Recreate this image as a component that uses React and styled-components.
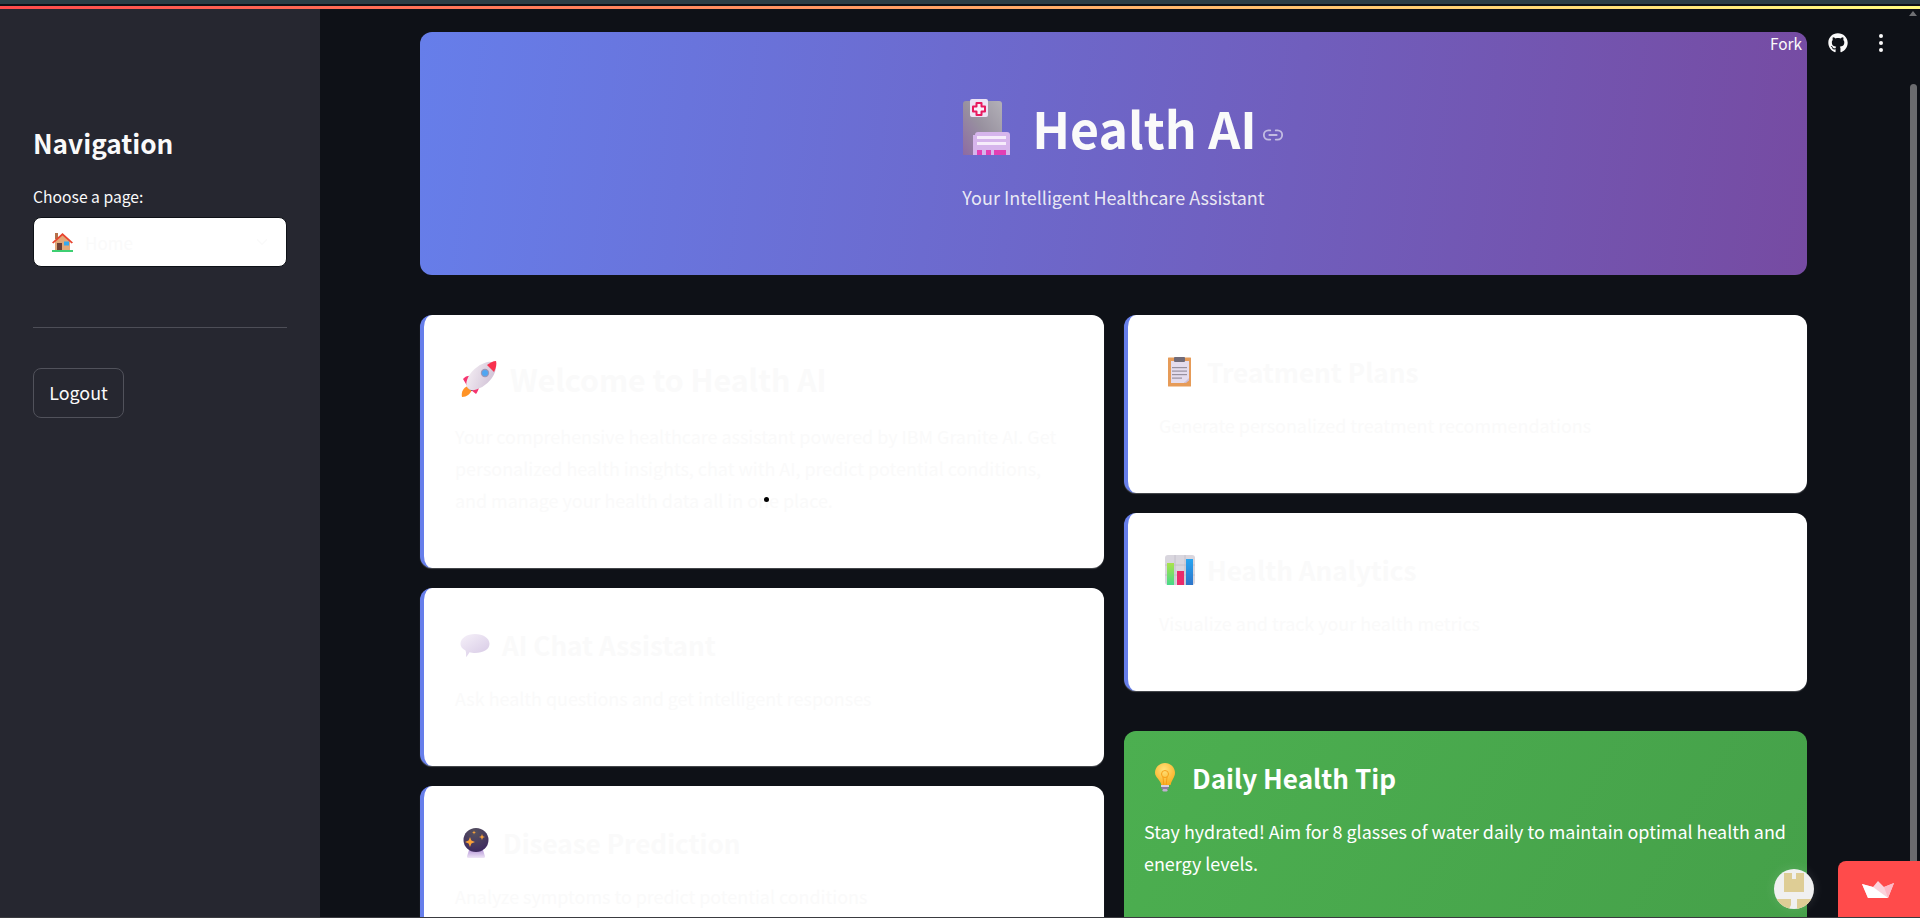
import React from "react";
import styled, { createGlobalStyle } from "styled-components";
import { ChevronDown, Link2 } from "lucide-react";
import { FaGithub } from "react-icons/fa";

const GlobalStyle = createGlobalStyle`
  html, body {
    margin: 0;
    height: 100%;
    overflow: hidden;
    background: #0e1117;
  }
  * { box-sizing: border-box; }
  body {
    font-family: "Noto Sans CJK SC", "Liberation Sans", sans-serif;
    color: #fafafa;
  }
`;

const Page = styled.div`
  position: relative;
  display: flex;
  flex-direction: column;
  width: 1920px;
  height: 918px;
  overflow: hidden;
  background: #0e1117;
`;

const ChromeStrip = styled.div`
  flex: none;
  height: 4px;
  background: #2b3e46;
`;

const Decoration = styled.div`
  flex: none;
  height: 5px;
  border-top: 2px solid #0e1117;
  background-clip: padding-box;
  background-image: linear-gradient(90deg, #ff4b4b, #fffd80);
`;

const Body = styled.div`
  flex: 1;
  min-height: 0;
  display: flex;
`;

const BottomEdge = styled.div`
  flex: none;
  height: 1px;
  background: #3a3b40;
`;

const Sidebar = styled.aside`
  flex: none;
  width: 320px;
  padding: 117px 33px 0;
  background: #262730;
`;

const NavTitle = styled.h2`
  margin: 0 0 26px;
  font-size: 26.2px;
  line-height: 34px;
  font-weight: 600;
`;

const FieldLabel = styled.div`
  font-size: 15.7px;
  line-height: 22px;
  margin-bottom: 9px;
`;

const Select = styled.div`
  display: flex;
  align-items: center;
  gap: 12px;
  height: 50px;
  padding: 0 15px 0 18px;
  background: #fff;
  border: 1px solid #0e1117;
  border-radius: 8px;
  font-size: 17px;
  color: #fafafa;
`;

const SelectValue = styled.span`
  flex: 1;
`;

const Divider = styled.hr`
  margin: 60px 0 40px;
  border: 0;
  border-top: 1px solid #4d4e57;
`;

const LogoutButton = styled.button`
  display: block;
  width: 91px;
  height: 50px;
  padding: 0 0 2px;
  color: #fafafa;
  font: inherit;
  font-size: 17.9px;
  background: #262730;
  border: 1px solid #51525b;
  border-radius: 8px;
`;

const Main = styled.main`
  flex: 1;
  min-width: 0;
  padding: 23px 113px 0 100px;
`;

const Hero = styled.header`
  height: 243px;
  margin-bottom: 40px;
  padding-top: 59px;
  border-radius: 12px;
  background: linear-gradient(97deg, #667eea 0%, #764ba2 100%);
  text-align: center;
`;

const HeroTitle = styled.h1`
  display: flex;
  justify-content: center;
  align-items: center;
  height: 72px;
  margin: 0 0 19px;
  padding-left: 19px;
  font-size: 50px;
  line-height: 72px;
  font-weight: 700;

  svg.link {
    margin: 16px 0 0 5px;
    color: rgba(250, 250, 250, 0.6);
  }
`;

const HeroEmoji = styled.span`
  flex: none;
  display: flex;
  width: 70px;
`;

const HeroSub = styled.p`
  margin: 0;
  font-size: 18px;
  line-height: 30px;
  color: rgba(250, 250, 250, 0.9);
`;

const Columns = styled.div`
  display: grid;
  grid-template-columns: 684px 683px;
  column-gap: 20px;
  align-items: start;
`;

const Column = styled.div`
  display: flex;
  flex-direction: column;
  gap: 20.6px;
`;

const Card = styled.section`
  padding: 32px 32px 32.6px 31px;
  background: #fff;
  border-left: 4px solid #667eea;
  border-radius: 12px;
  box-shadow: 0 1px 1px rgba(255, 255, 255, 0.25);
`;

const CardHeading = styled.h3`
  display: flex;
  align-items: center;
  margin: 0 0 ${(p) => (p.$big ? "9px" : "12px")};
  font-size: ${(p) => (p.$big ? "30.3px" : "26.1px")};
  line-height: ${(p) => (p.$big ? "64px" : "50px")};
  font-weight: 700;
  color: #fafafa;
`;

const EmojiSlot = styled.span`
  flex: none;
  display: flex;
  justify-content: center;
  align-items: center;
  width: ${(p) => p.$w}px;
  padding-right: 7px;
`;

const CardText = styled.p`
  margin: 0 0 19px;
  font-size: 17.92px;
  line-height: 32px;
  color: #fafafa;
`;

const TipCard = styled.section`
  margin-top: 20px;
  height: 240px;
  padding: 24px 20px;
  border-radius: 12px;
  background: linear-gradient(120deg, #4caf50, #45a049);
  color: #fff;
`;

const TipHeading = styled.h3`
  display: flex;
  align-items: center;
  margin: 0 0 13.5px;
  font-size: 26.1px;
  line-height: 46px;
  font-weight: 700;
`;

const TipText = styled.p`
  margin: 0;
  font-size: 17.92px;
  line-height: 32px;
`;

const Toolbar = styled.div`
  position: absolute;
  top: 27px;
  right: 37px;
  display: flex;
  align-items: center;
  height: 32px;
  font-size: 15.4px;
  color: #fafafa;
`;

const ForkLabel = styled.span`
  margin-right: 26px;
`;

const Kebab = styled.span`
  display: flex;
  flex-direction: column;
  gap: 3px;
  margin-left: 31px;

  i {
    display: block;
    width: 4px;
    height: 4px;
    border-radius: 50%;
    background: #fafafa;
  }
`;

const ScrollArrow = styled.div`
  position: absolute;
  top: 11px;
  right: 3px;
  width: 0;
  height: 0;
  border-left: 4px solid transparent;
  border-right: 4px solid transparent;
  border-bottom: 5px solid #6f7073;
`;

const ScrollThumb = styled.div`
  position: absolute;
  top: 84px;
  right: 3px;
  bottom: 1px;
  width: 7px;
  border-radius: 4px 4px 0 0;
  background: #6b6c6f;
`;

const PackageBubble = styled.div`
  position: absolute;
  left: 1774px;
  top: 869px;
  display: flex;
  width: 40px;
  height: 40px;
  border-radius: 50%;
  overflow: hidden;
  background: #f0f0f0;
  box-shadow: 0 0 12px rgba(255, 255, 255, 0.12);
`;

const DeployTab = styled.div`
  position: absolute;
  left: 1838px;
  top: 861px;
  display: flex;
  justify-content: center;
  padding: 20px 3px 0 0;
  width: 82px;
  height: 56px;
  background: #ff4b4b;
  border-radius: 8px 0 0 0;
`;

const CursorDot = styled.div`
  position: absolute;
  left: 764px;
  top: 497px;
  width: 5px;
  height: 5px;
  border-radius: 50%;
  background: #000;
`;

const HouseEmoji = () => (
  <svg width="21" height="20" viewBox="0 0 21 20">
    <rect x="3" y="1" width="3" height="6" fill="#b5714a" />
    <path d="M3 9 10.5 3 18 9v10H3z" fill="#e2a878" />
    <path d="M0 10.5 10.5 1 21 10.5l-1.4 1L10.5 3.6 1.4 11.5z" fill="#e8442f" />
    <rect x="5" y="11" width="5" height="8" fill="#6e4034" />
    <rect x="12" y="9.5" width="5" height="4" fill="#35a9ee" />
    <rect y="18" width="21" height="2" fill="#3ecf72" />
  </svg>
);

const HospitalEmoji = () => (
  <svg width="48" height="56" viewBox="0 0 48 56">
    <defs>
      <linearGradient id="hospWall" x1="0" y1="1" x2="1" y2="0">
        <stop offset="0" stopColor="#8d6aa3" />
        <stop offset="0.5" stopColor="#98919f" />
        <stop offset="1" stopColor="#b3b1b8" />
      </linearGradient>
    </defs>
    <path d="M4 2h33a3 3 0 0 1 3 3v51H1V5a3 3 0 0 1 3-3z" fill="url(#hospWall)" />
    <rect x="8" y="0" width="18" height="18" rx="2" fill="#ece3f5" />
    <path
      d="M14.5 4h5v3.5H23v5h-3.500V16h-5v-3.500H11v-5h3.500z"
      fill="#f8f1fb"
      stroke="#e8195f"
      strokeWidth="2"
      strokeLinejoin="round"
    />
    <path d="M13 36a3 3 0 0 1 3-3h29a3 3 0 0 1 3 3v20H11V36z" fill="#d6b5ec" />
    <rect x="15" y="37" width="29" height="3" fill="#f6ecfb" />
    <rect x="15" y="43" width="29" height="3" fill="#f6ecfb" />
    <rect x="15" y="51" width="5" height="5" fill="#e23fb4" />
    <rect x="24" y="51" width="5" height="5" fill="#e23fb4" />
    <rect x="32" y="51" width="12" height="5" fill="#e23fb4" />
  </svg>
);

const RocketEmoji = () => (
  <svg width="36" height="36" viewBox="0 0 36 36">
    <defs>
      <linearGradient id="rocketBody" x1="0" y1="0" x2="1" y2="1">
        <stop offset="0" stopColor="#f6f0f5" />
        <stop offset="1" stopColor="#cdbdd3" />
      </linearGradient>
    </defs>
    <path d="M1 36c-1-5 1-9 6-11l4 4c-2 4-5 7-10 7z" fill="#ff9326" />
    <path d="M2 18c2-3 6-4 10-3l5 8-9 5z" fill="#f5356f" />
    <path d="M17 20c2 4 1 9-2 13l-5-4 1-7z" fill="#f5356f" />
    <path d="M7 27l4 3 1.500-1.500-4-3z" fill="#3f3a7a" />
    <ellipse cx="20" cy="15" rx="18" ry="9.500" transform="rotate(-43 20 15)" fill="url(#rocketBody)" />
    <path d="M26 4c3-2 6-4 9-4 1 3 0 7-2 11z" fill="#f8314e" />
    <circle cx="24" cy="12" r="4.200" fill="#9b98b8" />
    <circle cx="24" cy="12" r="3" fill="#4fa6f2" />
  </svg>
);

const BalloonEmoji = () => (
  <svg width="30" height="23" viewBox="0 0 30 23">
    <defs>
      <linearGradient id="balloonFill" x1="0" y1="0" x2="0.8" y2="1">
        <stop offset="0" stopColor="#f6f1f9" />
        <stop offset="1" stopColor="#d8cbe6" />
      </linearGradient>
    </defs>
    <path
      d="M15 0c8 0 14.500 4 14.500 9.800S23 19 15 19c-2 0-4-.3-5.500-.8C8.500 20 7.500 21.500 6 23c.3-2.500.2-4.500-.5-6.500C2 14.800.5 12.500.5 9.800.5 4 7 0 15 0z"
      fill="url(#balloonFill)"
    />
  </svg>
);

const Sparkle = ({ x, y, r }) => (
  <path
    d={`M${x} ${y - r}l${r * 0.28} ${r * 0.72} ${r * 0.72} ${r * 0.28}-${r * 0.72} ${r * 0.28}-${r * 0.28} ${r * 0.72}-${r * 0.28}-${r * 0.72}-${r * 0.72}-${r * 0.28} ${r * 0.72}-${r * 0.28}z`}
    fill="#f9a13a"
  />
);

const CrystalEmoji = () => (
  <svg width="26" height="30" viewBox="0 0 26 30">
    <defs>
      <radialGradient id="crystalBall" cx="0.45" cy="0.2" r="0.9">
        <stop offset="0" stopColor="#56525e" />
        <stop offset="1" stopColor="#3b2560" />
      </radialGradient>
      <linearGradient id="crystalBase" x1="0" y1="0" x2="0" y2="1">
        <stop offset="0" stopColor="#b79ad8" />
        <stop offset="1" stopColor="#efe6f7" />
      </linearGradient>
    </defs>
    <path d="M6 22h14l2 6.500a1.500 1.500 0 0 1-1.500 1.500h-15A1.500 1.500 0 0 1 4 28.500z" fill="url(#crystalBase)" />
    <ellipse cx="13" cy="12" rx="12.500" ry="12" fill="url(#crystalBall)" />
    <Sparkle x={7} y={14} r={5} />
    <Sparkle x={19} y={9} r={3} />
    <Sparkle x={11} y={4.500} r={2} />
  </svg>
);

const ClipboardEmoji = () => (
  <svg width="24" height="30" viewBox="0 0 24 30">
    <rect width="23" height="29" y="0.500" rx="0.500" fill="#e69b58" />
    <path d="M3 4h18v19l-5 3H3z" fill="#e4dced" />
    <path d="M16 26l5-5v2.500L18 26z" fill="#cdbfda" />
    <rect x="6" y="0" width="11" height="5" rx="1" fill="#716b78" />
    <rect x="4" y="10" width="15" height="1.200" fill="#97909f" />
    <rect x="4" y="13.500" width="15" height="1.200" fill="#97909f" />
    <rect x="4" y="17" width="15" height="1.200" fill="#97909f" />
    <rect x="4" y="20.500" width="10" height="1.200" fill="#97909f" />
  </svg>
);

const ChartEmoji = () => (
  <svg width="30" height="30" viewBox="0 0 30 30">
    <defs>
      <linearGradient id="barGreen" x1="0" y1="0" x2="0" y2="1">
        <stop offset="0" stopColor="#a9e24a" />
        <stop offset="1" stopColor="#46d98a" />
      </linearGradient>
      <linearGradient id="barBlue" x1="0" y1="0" x2="0" y2="1">
        <stop offset="0" stopColor="#27a5f2" />
        <stop offset="1" stopColor="#2d74c9" />
      </linearGradient>
    </defs>
    <rect width="30" height="30" rx="3" fill="#d9d6de" />
    <path d="M10 0v30M20 0v30M0 10h30M0 20h30" stroke="#bfbcc6" strokeWidth="0.800" />
    <rect x="2" y="8" width="7" height="22" fill="url(#barGreen)" />
    <rect x="12" y="16" width="7" height="14" fill="#ea2a6b" />
    <rect x="21" y="4" width="7" height="26" fill="url(#barBlue)" />
  </svg>
);

const BulbEmoji = () => (
  <svg width="20" height="30" viewBox="0 0 20 30">
    <defs>
      <radialGradient id="bulbGlass" cx="0.45" cy="0.3" r="0.75">
        <stop offset="0" stopColor="#ffe27a" />
        <stop offset="1" stopColor="#f9ab1c" />
      </radialGradient>
    </defs>
    <path
      d="M10 0c5.500 0 10 4.400 10 9.800 0 4.700-3.300 6.700-4.400 12.200H6.400C5.300 16.500 0 14.500 0 9.800 0 4.400 4.500 0 10 0z"
      fill="url(#bulbGlass)"
    />
    <circle cx="10" cy="11" r="3.500" fill="none" stroke="#f59a13" strokeWidth="0.900" />
    <path d="M8 14 8.800 22M12 14l-.8 8" stroke="#f59a13" strokeWidth="0.900" />
    <rect x="6" y="22" width="8" height="2" fill="#d9cfe2" />
    <rect x="6.500" y="24" width="7" height="2" fill="#8d7c9e" />
    <rect x="7.500" y="26" width="5" height="2.500" rx="1.200" fill="#c2aed2" />
  </svg>
);

const PackageIcon = () => (
  <svg width="40" height="40" viewBox="0 0 40 40">
    <path d="M10 4h8v6h4V4h8v19H10z" fill="#decd95" />
    <path d="M0 30h17v6l-2 4H0zM23 30h17v10H23z" fill="#decd95" />
  </svg>
);

const CrownIcon = () => (
  <svg width="32" height="17" viewBox="0 0 32 17">
    <path d="M0 3 11 6 16 0l6 6 10-4-6 15H6z" fill="#fbd3dc" />
    <path d="M0 3 11 6l15 11H6z" fill="#fff" />
    <path d="M32 2l-6 15-4-11z" fill="#fdb9c6" />
  </svg>
);

const features = {
  left: [
    { Icon: BalloonEmoji, slot: 47, title: "AI Chat Assistant", text: "Ask health questions and get intelligent responses" },
    { Icon: CrystalEmoji, slot: 48, title: "Disease Prediction", text: "Analyze symptoms to predict potential conditions" },
  ],
  right: [
    { Icon: ClipboardEmoji, slot: 48, title: "Treatment Plans", text: "Generate personalized treatment recommendations" },
    { Icon: ChartEmoji, slot: 48, title: "Health Analytics", text: "Visualize and track your health metrics" },
  ],
};

const FeatureCard = ({ Icon, slot, title, text }) => (
  <Card>
    <CardHeading>
      <EmojiSlot $w={slot}>
        <Icon />
      </EmojiSlot>
      {title}
    </CardHeading>
    <CardText>{text}</CardText>
  </Card>
);

const App = () => {
  return (
    <Page>
      <GlobalStyle />
      <ChromeStrip />
      <Decoration />
      <Body>
        <Sidebar>
          <NavTitle>Navigation</NavTitle>
          <FieldLabel>Choose a page:</FieldLabel>
          <Select>
            <HouseEmoji />
            <SelectValue>Home</SelectValue>
            <ChevronDown size={18} color="#fafafa" />
          </Select>
          <Divider />
          <LogoutButton>Logout</LogoutButton>
        </Sidebar>
        <Main>
          <Hero>
            <HeroTitle>
              <HeroEmoji>
                <HospitalEmoji />
              </HeroEmoji>
              Health AI
              <Link2 className="link" size={22} />
            </HeroTitle>
            <HeroSub>Your Intelligent Healthcare Assistant</HeroSub>
          </Hero>
          <Columns>
            <Column>
              <Card>
                <CardHeading $big>
                  <EmojiSlot $w={55}>
                    <RocketEmoji />
                  </EmojiSlot>
                  Welcome to Health AI
                </CardHeading>
                <CardText>
                  Your comprehensive healthcare assistant powered by IBM Granite AI. Get personalized health insights, chat with AI, predict potential conditions, and manage your health data all in one place.
                </CardText>
              </Card>
              {features.left.map((f) => (
                <FeatureCard key={f.title} {...f} />
              ))}
            </Column>
            <Column>
              {features.right.map((f) => (
                <FeatureCard key={f.title} {...f} />
              ))}
              <TipCard>
                <TipHeading>
                  <EmojiSlot $w={48}>
                    <BulbEmoji />
                  </EmojiSlot>
                  Daily Health Tip
                </TipHeading>
                <TipText>Stay hydrated! Aim for 8 glasses of water daily to maintain optimal health and energy levels.</TipText>
              </TipCard>
            </Column>
          </Columns>
        </Main>
      </Body>
      <BottomEdge />
      <Toolbar>
        <ForkLabel>Fork</ForkLabel>
        <FaGithub size={20} />
        <Kebab>
          <i />
          <i />
          <i />
        </Kebab>
      </Toolbar>
      <ScrollArrow />
      <ScrollThumb />
      <CursorDot />
      <PackageBubble>
        <PackageIcon />
      </PackageBubble>
      <DeployTab>
        <CrownIcon />
      </DeployTab>
    </Page>
  );
};

export default App;
